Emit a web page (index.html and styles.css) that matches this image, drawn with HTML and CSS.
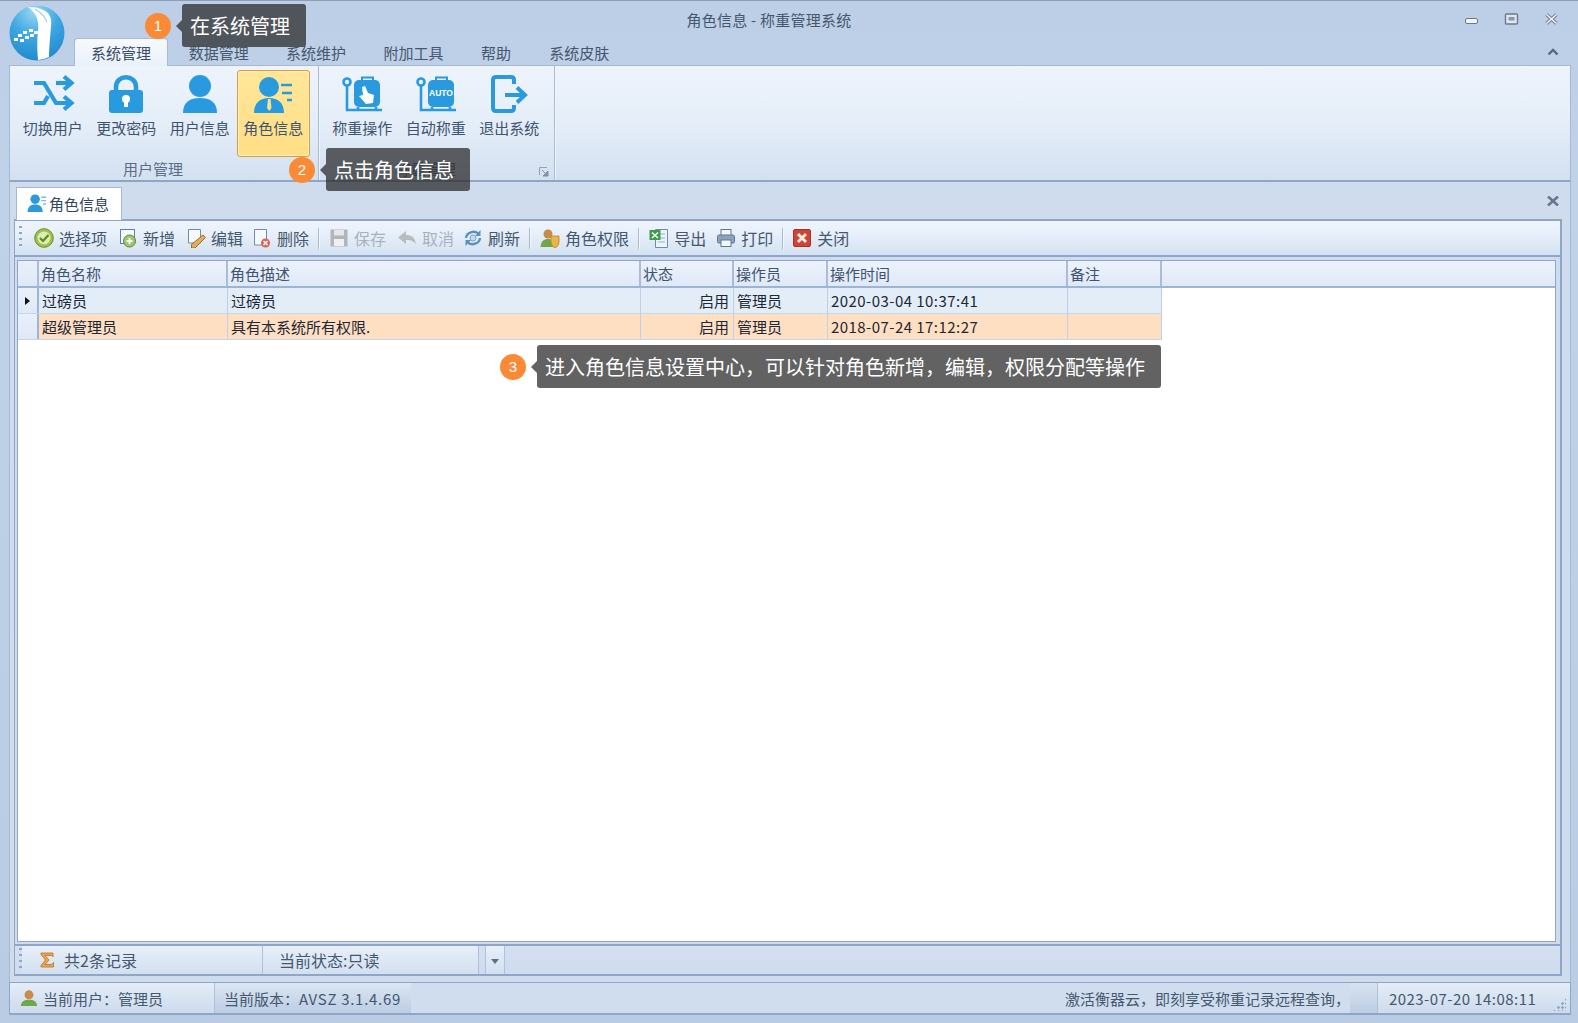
FILE: index.html
```html
<!DOCTYPE html>
<html lang="zh-CN">
<head>
<meta charset="utf-8">
<title>角色信息 - 称重管理系统</title>
<link rel="stylesheet" href="styles.css">
</head>
<body>
<div class="window">
  <svg class="logo" viewBox="0 0 56 56"><defs><radialGradient id="lg" cx=".45" cy=".1" r="1"><stop offset="0" stop-color="#9ad8f4"/><stop offset=".45" stop-color="#3fa8e2"/><stop offset="1" stop-color="#1a84cc"/></radialGradient></defs><circle cx="28" cy="28" r="27.500" fill="url(#lg)"/><path d="M19 2C30 2 40 5 42 14C43 20 41 26 40 52Q34 55 29 55C28 44 28 34 29 27C30 18 29 9 19 2Z" fill="#fff"/><path d="M26 4C31 7 36 11 38 17" fill="none" stroke="#9fd2ee" stroke-width="1.200"/><g fill="#fff"><rect x="5" y="33" width="4" height="3"/><rect x="9" y="29" width="4" height="3"/><rect x="11" y="34" width="4" height="3"/><rect x="14" y="26" width="4" height="3"/><rect x="16" y="31" width="4" height="3"/><rect x="20" y="24" width="4" height="3"/><rect x="21" y="29" width="4" height="3"/><rect x="25" y="26" width="4" height="3"/></g></svg>

  <header class="titlebar">
    <div class="title">角色信息 - 称重管理系统</div>
    <div class="winbtns">
      <svg width="16" height="12" viewBox="0 0 16 12"><rect x="1.500" y="5.500" width="12" height="5" rx="1.500" fill="#f2f5fa" stroke="#6d7888"/></svg>
      <svg width="16" height="12" viewBox="0 0 16 12"><rect x="1.500" y="1" width="12" height="10" rx="1" fill="#dfe7f2" stroke="#6d7888" stroke-width="1.400"/><rect x="4.500" y="4" width="6" height="3.500" fill="#8a97a8"/></svg>
      <svg width="16" height="12" viewBox="0 0 16 12"><path d="M2.500 1.500L12.500 10.500M12.500 1.500L2.500 10.500" stroke="#6d7888" stroke-width="3.400"/><path d="M2.500 1.500L12.500 10.500M12.500 1.500L2.500 10.500" stroke="#f2f5fa" stroke-width="1.600"/></svg>
    </div>
  </header>

  <nav class="tabs">
    <span class="tab active">系统管理</span>
    <span class="tab">数据管理</span>
    <span class="tab">系统维护</span>
    <span class="tab">附加工具</span>
    <span class="tab">帮助</span>
    <span class="tab">系统皮肤</span>
    <svg class="collapse" width="14" height="10" viewBox="0 0 14 10"><path d="M2.500 7.500L7 3L11.500 7.500" fill="none" stroke="#5c6675" stroke-width="2.400"/></svg>
  </nav>

  <section class="ribbon">
    <div class="group group-a">
      <div class="buttons">
        <div class="rb">
          <svg class="rb-icon" viewBox="0 0 44 38"><g fill="none" stroke="#2a9adf" stroke-width="4.200"><path d="M3 8H13L25 28H40"/><path d="M25 8H40"/><path d="M3 28H13L17 21"/><path d="M33 1.500L40.500 8L33 14.500"/><path d="M33 21.500L40.500 28L33 34.500"/></g></svg>
          <span>切换用户</span>
        </div>
        <div class="rb">
          <svg class="rb-icon" viewBox="0 0 44 38"><path d="M12 17V12C12 -1 32 -1 32 12V17" fill="none" stroke="#2a9adf" stroke-width="4.600"/><path d="M8 15H36Q39 15 39 18V35Q39 38 36 38H8Q5 38 5 35V18Q5 15 8 15Z" fill="#2a9adf"/><circle cx="22" cy="24" r="4" fill="#fff"/><rect x="20" y="25" width="4" height="7" fill="#fff"/></svg>
          <span>更改密码</span>
        </div>
        <div class="rb">
          <svg class="rb-icon" viewBox="0 0 44 38"><circle cx="22" cy="11" r="11" fill="#2a9adf"/><path d="M5 38C5 27 12 23 22 23C32 23 39 27 39 38Z" fill="#2a9adf"/></svg>
          <span>用户信息</span>
        </div>
        <div class="rb selected">
          <svg class="rb-icon" viewBox="0 0 44 38"><circle cx="18" cy="12" r="10" fill="#2a9adf"/><path d="M3 38C3 28 9 23 18 23C27 23 33 28 33 38Z" fill="#2a9adf"/><path d="M17 24H19.500L20.500 33L18.200 36L16 33Z" fill="#ffe08a"/><path d="M30 10H41M31 18H41M36 25H41" stroke="#2a9adf" stroke-width="2.600"/></svg>
          <span>角色信息</span>
        </div>
      </div>
      <div class="group-label">用户管理</div>
    </div>
    <div class="group group-b">
      <div class="buttons">
        <div class="rb">
          <svg class="rb-icon" viewBox="0 0 44 38"><path d="M7 8V35H42M18 32V35M36 32V35" fill="none" stroke="#2a9adf" stroke-width="2.600"/><circle cx="7" cy="7" r="3.500" fill="#e8f0fa" stroke="#2a9adf" stroke-width="2.600"/><path d="M22 6V2.500H33V6" fill="none" stroke="#2a9adf" stroke-width="2"/><rect x="14" y="5" width="26" height="27" rx="5" fill="#2a9adf"/><path d="M22 12L25 11L28 18L34 20L33 28L26 29L19 21L23 20Z" fill="#fff"/></svg>
          <span>称重操作</span>
        </div>
        <div class="rb">
          <svg class="rb-icon" viewBox="0 0 44 38"><path d="M7 8V35H42M18 32V35M36 32V35" fill="none" stroke="#2a9adf" stroke-width="2.600"/><circle cx="7" cy="7" r="3.500" fill="#e8f0fa" stroke="#2a9adf" stroke-width="2.600"/><path d="M22 6V2.500H33V6" fill="none" stroke="#2a9adf" stroke-width="2"/><rect x="14" y="5" width="26" height="27" rx="5" fill="#2a9adf"/><text x="27" y="21" class="auto">AUTO</text></svg>
          <span>自动称重</span>
        </div>
        <div class="rb">
          <svg class="rb-icon" viewBox="0 0 44 38"><path d="M27 9V5Q27 2 24 2H9Q6 2 6 5V33Q6 36 9 36H24Q27 36 27 33V30" fill="none" stroke="#2a9adf" stroke-width="4"/><path d="M18 20H37M30 12.500L38 20L30 27.500" fill="none" stroke="#2a9adf" stroke-width="4"/></svg>
          <span>退出系统</span>
        </div>
      </div>
      <div class="group-label">称重管理</div>
      <svg class="launcher" width="10" height="10" viewBox="0 0 10 10"><path d="M0.500 8V0.500H8" fill="none" stroke="#8fa2b8"/><path d="M3 3L8 8M9 4V9H4Z" fill="#7f92a8" stroke="#7f92a8"/></svg>
    </div>
    <div class="group-rest"></div>
  </section>

  <section class="docstrip">
    <div class="doctab">
      <svg width="21" height="18" viewBox="0 0 44 38"><circle cx="17" cy="11" r="10" fill="#2a9adf"/><path d="M1 38C1 27 7 22 17 22C27 22 33 27 33 38Z" fill="#2a9adf"/><path d="M30 7H40M30 14H40M34 21H40" stroke="#7db6de" stroke-width="3"/></svg>
      <span>角色信息</span>
    </div>
    <svg class="docclose" width="12" height="10" viewBox="0 0 12 10"><path d="M1 0.500L11 9.500M11 0.500L1 9.500" stroke="#66788f" stroke-width="2.600"/></svg>
  </section>

  <main class="panel">
    <div class="toolbar">
      <span class="grip"></span>
      <div class="ti first"><svg class="ti-icon" viewBox="0 0 20 20"><circle cx="10" cy="10" r="9.300" fill="#9cc243" stroke="#6b8f2a"/><circle cx="10" cy="10" r="6.500" fill="#dfeab8"/><path d="M6 10L9 13L14.500 7" fill="none" stroke="#5c8a1e" stroke-width="2.200"/></svg><span>选择项</span></div>
      <div class="ti"><svg class="ti-icon" viewBox="0 0 20 20"><rect x="2.500" y="1.500" width="14" height="14" fill="#f7f9fc" stroke="#5f7fa8"/><circle cx="11.500" cy="13" r="6" fill="#9cc96b" stroke="#5d8a3c"/><path d="M8.500 13H14.500M11.500 10V16" stroke="#fff" stroke-width="1.800"/></svg><span>新增</span></div>
      <div class="ti"><svg class="ti-icon" viewBox="0 0 20 20"><path d="M2.500 1.500H14.500V15H2.500Z" fill="#f7f9fc" stroke="#6f8cb0"/><path d="M17 7L19.500 9.500L9 20H5.500V16.500Z" fill="#e2b05a" stroke="#9a6c2a"/></svg><span>编辑</span></div>
      <div class="ti t2"><svg class="ti-icon" viewBox="0 0 20 20"><path d="M2.500 1.500H14.500V17H2.500Z" fill="#f7f9fc" stroke="#6f8cb0"/><circle cx="13.500" cy="15" r="4.500" fill="#e2604f"/><path d="M11.500 13L15.500 17M15.500 13L11.500 17" stroke="#fff" stroke-width="1.500"/></svg><span>删除</span></div>
      <span class="sep"></span>
      <div class="ti off"><svg class="ti-icon" viewBox="0 0 20 20"><rect x="1.500" y="1.500" width="17" height="17" fill="#b2b6bb"/><rect x="5" y="2" width="10" height="5.500" fill="#e4e6e8"/><rect x="5" y="11" width="10" height="7" fill="#eef0f1"/></svg><span>保存</span></div>
      <div class="ti off"><svg class="ti-icon" viewBox="0 0 20 20"><path d="M9 3V7C15 7 18 10 19 16C16 12.500 13 12 9 12V16L1 9.500Z" fill="#b8bcc1"/></svg><span>取消</span></div>
      <div class="ti t2"><svg class="ti-icon" viewBox="0 0 20 20"><g fill="none" stroke="#5d8fc0" stroke-width="2.400"><path d="M3 10A7.500 6.500 0 0 1 16 6"/><path d="M17 10A7.500 6.500 0 0 1 4 14"/></g><path d="M17.500 2V8H12ZM2.500 18V12H8Z" fill="#5d8fc0"/><circle cx="10" cy="10" r="3" fill="#c6d9ec" stroke="#7ea3c8"/></svg><span>刷新</span></div>
      <span class="sep"></span>
      <div class="ti"><svg class="ti-icon" viewBox="0 0 20 20"><circle cx="8" cy="6" r="4.500" fill="#c98a4a"/><path d="M0.500 19C1 13 4 11 8 11C12 11 14 13 14.500 19Z" fill="#6fa84a"/><path d="M11 8H19V14Q19 18 15 20Q11 18 11 14Z" fill="#eeb445" stroke="#b9822a" stroke-width=".8"/></svg><span>角色权限</span></div>
      <span class="sep"></span>
      <div class="ti"><svg class="ti-icon" viewBox="0 0 20 20"><path d="M6.500 1.500H18.500V19.500H6.500Z" fill="#edf3fa" stroke="#6f8cb0"/><path d="M9 6H16M9 10H16M9 14H16" stroke="#8fb0d0"/><rect x="0.500" y="2" width="11" height="10" fill="#3f9a4a"/><path d="M3 4.500L9 10M9 4.500L3 10" stroke="#fff" stroke-width="1.500"/></svg><span>导出</span></div>
      <div class="ti t1"><svg class="ti-icon" viewBox="0 0 20 20"><rect x="5" y="1.500" width="10" height="6" fill="#f4f7fb" stroke="#60788f"/><rect x="1.500" y="7" width="17" height="8" rx="1.500" fill="#8ba3bc" stroke="#60788f"/><rect x="5" y="12" width="10" height="6.500" fill="#f4f7fb" stroke="#60788f"/></svg><span>打印</span></div>
      <span class="sep"></span>
      <div class="ti t1"><svg class="ti-icon" viewBox="0 0 20 20"><rect x="1.500" y="1.500" width="17" height="17" rx="1.500" fill="#cf4436" stroke="#a53226"/><path d="M6 6L14 14M14 6L6 14" stroke="#f7ece0" stroke-width="3"/></svg><span>关闭</span></div>
    </div>

    <div class="grid-wrap">
      <div class="grid">
        <div class="row head">
          <div class="cell ind"></div><div class="cell">角色名称</div><div class="cell">角色描述</div><div class="cell">状态</div><div class="cell">操作员</div><div class="cell">操作时间</div><div class="cell">备注</div><div class="cell filler"></div>
        </div>
        <div class="row body-row r1">
          <div class="cell ind"><span class="arrow"></span></div><div class="cell">过磅员</div><div class="cell">过磅员</div><div class="cell right">启用</div><div class="cell">管理员</div><div class="cell num">2020-03-04 10:37:41</div><div class="cell"></div>
        </div>
        <div class="row body-row r2">
          <div class="cell ind"></div><div class="cell">超级管理员</div><div class="cell">具有本系统所有权限.</div><div class="cell right">启用</div><div class="cell">管理员</div><div class="cell num">2018-07-24 17:12:27</div><div class="cell"></div>
        </div>
      </div>
    </div>

    <div class="footbar">
      <span class="grip"></span>
      <div class="fb-a"><svg width="15" height="16" viewBox="0 0 15 16"><path d="M1 1H13V5L11.500 3.500H5L9 8L5 12.500H11.500L13.500 10.500V15H1V13.500L5.500 8L1 2.500Z" fill="#eba648" stroke="#b8742a" stroke-width=".8"/></svg><span>共2条记录</span></div>
      <div class="fb-b">当前状态:只读</div>
      <div class="fb-c"><span class="caret"></span></div>
    </div>
  </main>

  <footer class="statusbar">
    <div class="sb-user"><svg width="18" height="20" viewBox="0 0 20 20"><circle cx="10" cy="6.500" r="5" fill="#c98a4a"/><path d="M1 19C1 14 5 12 10 12C15 12 19 14 19 19Z" fill="#6fa84a"/></svg><span>当前用户：管理员</span></div>
    <div class="sb-ver"><span>当前版本：</span><span class="num ver">AVSZ 3.1.4.69</span></div>
    <div class="sb-msg">激活衡器云，即刻享受称重记录远程查询，</div>
    <div class="sb-fade"></div>
    <div class="sb-time num">2023-07-20 14:08:11</div>
    <span class="sb-grip"></span>
  </footer>

  <div class="callout c1"><b>1</b><span>在系统管理</span></div>
  <div class="callout c2"><b>2</b><span>点击角色信息</span></div>
  <div class="callout c3"><b>3</b><span>进入角色信息设置中心，可以针对角色新增，编辑，权限分配等操作</span></div>
</div>
</body>
</html>
```

FILE: styles.css
```css
* { box-sizing: border-box; }
html, body { margin: 0; height: 100%; overflow: hidden; }
body { font-family: "Noto Sans CJK SC", "Liberation Sans", sans-serif; font-size: 15px; color: #3f5470; }
svg { display: block; flex: none; }
.num { letter-spacing: .45px; white-space: nowrap; }
.ver { letter-spacing: .7px; }

.window { position: relative; width: 1578px; height: 1023px; display: flex; flex-direction: column; padding: 0 7px 0 9px; background: linear-gradient(#bccfe7, #c0d2e8 190px, #b9cce3); border-top: 1px solid #8e9db1; }

.logo { position: absolute; left: 9px; top: 4px; width: 56px; height: 56px; z-index: 3; }

.titlebar { height: 37px; flex: none; display: flex; align-items: center; justify-content: center; padding-right: 42px; position: relative; }
.title { font-size: 15px; letter-spacing: .25px; color: #46566c; margin-top: -1px; }
.winbtns { position: absolute; right: 11px; top: 12px; display: flex; gap: 24px; }

.tabs { height: 27px; flex: none; display: flex; align-items: stretch; padding-left: 65px; position: relative; }
.tab { padding: 3px 18.700px 0; line-height: 24px; font-size: 15px; color: #46566c; }
.tab:nth-child(6) { margin-left: 1px; }
.tab.active { background: linear-gradient(#f7fafe, #e9f1fa); border: 1px solid #a7bbd5; border-bottom: 0; border-radius: 4px 4px 0 0; padding: 2px 16px 0; margin-right: 2px; color: #3a4c66; position: relative; z-index: 1; margin-bottom: -1px; }
.collapse { position: absolute; right: 11px; top: 9px; }

.ribbon { height: 117px; flex: none; display: flex; background: linear-gradient(#eef4fc, #e3edf8 55%, #d3e0f0); border: 1px solid #a5b9d3; border-bottom: 2px solid #8fa6c4; }
.group { position: relative; display: flex; flex-direction: column; border-right: 1px solid #a9bcd4; box-shadow: 1px 0 0 #f0f5fb; padding: 4px 0 0 6px; }
.group-a { width: 309px; }
.group-b { width: 236px; padding-left: 6.500px; }
.group-rest { flex: 1; }
.buttons { display: flex; height: 88px; }
.rb { width: 73.500px; display: flex; flex-direction: column; align-items: center; padding-top: 4px; border: 1px solid transparent; border-radius: 3px; }
.rb span { font-size: 15px; line-height: 20px; margin-top: 5px; color: #3f5470; white-space: nowrap; }
.rb-icon { width: 44px; height: 38px; overflow: visible; }
.rb.selected { background: linear-gradient(#ffe699, #ffdf85); border-color: #dd9a42; box-shadow: inset 0 0 0 1px #fff0b8; }
.group-label { text-align: center; font-size: 15px; line-height: 22px; color: #5a6d86; margin-top: 1px; padding-right: 28px; }
.launcher { position: absolute; right: 5px; bottom: 3px; }
.auto { font: 700 8.500px "Liberation Sans", sans-serif; fill: #fff; text-anchor: middle; }

.docstrip { height: 37px; flex: none; display: flex; align-items: flex-end; padding-left: 6px; position: relative; background: #cfdcee; border-left: 1px solid #a5b9d3; border-right: 1px solid #a5b9d3; }
.doctab { width: 106px; height: 33px; display: flex; align-items: center; gap: 1px; padding-left: 10px; padding-bottom: 2px; background: #fff; border: 1px solid #a4b9d5; border-bottom: 0; color: #33465f; font-size: 15px; margin-bottom: -1px; position: relative; z-index: 1; }
.docclose { position: absolute; right: 11px; top: 14px; }

.panel { flex: 1; min-height: 0; display: flex; flex-direction: column; background: #cfdcee; border: 1px solid #a5b9d3; border-top: 0; border-bottom: 0; padding: 0 3px 0 4px; }
.toolbar { height: 38px; flex: none; display: flex; align-items: center; padding-left: 2px; border: 1px solid #8ea7c8; border-width: 2px 2px 2px 1px; background: linear-gradient(#eef4fc, #e8f0fa 35%, #d5e2f2); margin: 0 5px 0 0; }
.grip { width: 3px; height: 24px; margin-left: 2px; flex: none; background: repeating-linear-gradient(#8ea5c3 0 2px, transparent 2px 6px); }
.ti { display: flex; align-items: center; gap: 5px; font-size: 16px; color: #44586f; margin-left: 11px; white-space: nowrap; }
.ti.first { margin-left: 12px; }
.ti.t1 { margin-left: 10px; }
.ti.t2 { margin-left: 9px; }
.ti.off { color: #a7b2bf; }
.ti-icon { width: 20px; height: 20px; }
.sep { width: 1px; height: 21px; background: #a9bcd4; box-shadow: 1px 0 0 #f3f7fc; margin-left: 9px; margin-right: -1px; flex: none; }

.grid-wrap { flex: 1; min-height: 0; background: #cfdcee; padding: 3px 0 2px 2px; margin-right: 5px; border-right: 2px solid #8ea7c8; border-left: 1px solid #8ea7c8; }
.grid { height: 100%; background: #fff; border: 1px solid #8ea7c8; margin-right: 4px; display: flex; flex-direction: column; }
.row { display: grid; grid-template-columns: 21px 189px 413px 93px 94px 240px 94px 1fr; flex: none; }
.head { height: 27px; background: linear-gradient(#edf3fc, #dfe9f7); border-bottom: 2px solid #9db5d5; color: #3e5470; }
.body-row { height: 26px; color: #1d2735; width: 1144px; grid-template-columns: 21px 189px 413px 93px 94px 240px 94px; border-bottom: 1px solid #c3d6ec; }
.r1 { background: #e3edf8; }
.r2 { background: #fedfc2; }
.cell { display: flex; align-items: center; padding-left: 3px; border-right: 1px solid #bcd0e8; font-size: 15px; white-space: nowrap; }
.head .cell { border-right: 2px solid #a9bdd9; padding-left: 2px; }
.head .filler { border-right: 0; }
.cell.right { justify-content: flex-end; padding-right: 4px; }
.ind { background: linear-gradient(#e8f0fa, #dfe9f6); border-right: 2px solid #9db5d5; justify-content: center; padding: 0; }
.arrow { width: 0; height: 0; border: 4.500px solid transparent; border-left: 5px solid #111; border-right: 0; }

.footbar { height: 32px; flex: none; display: flex; align-items: center; border: 1px solid #8ea7c8; border-width: 2px 2px 2px 1px; margin: 0 5px 6px 0; padding-left: 2px; background: linear-gradient(#d4e0f0, #cfdcee); font-size: 16px; color: #44586f; }
.fb-a { width: 241px; height: 100%; flex: none; display: flex; align-items: center; gap: 9px; padding-left: 18px; border-right: 1px solid #b0c2d9; box-shadow: 1px 0 0 #eef3fa; background: linear-gradient(#e7eff9, #d3e0f0); }
.fb-b { width: 216px; height: 100%; flex: none; display: flex; align-items: center; padding-left: 16px; border-right: 1px solid #b0c2d9; background: linear-gradient(#e7eff9, #d3e0f0); }
.fb-c { width: 20px; height: 100%; flex: none; margin-left: 6px; display: flex; align-items: center; justify-content: center; border-left: 1px solid #b0c2d9; border-right: 1px solid #b0c2d9; background: linear-gradient(#e7eff9, #d3e0f0); }
.caret { border: 4px solid transparent; border-top: 5px solid #5f6f82; border-bottom: 0; margin-top: 2px; }

.statusbar { height: 33px; flex: none; display: flex; align-items: center; margin: 0 0 8px; border: 1px solid #8ea7c8; border-width: 1px 1px 2px; position: relative; background: linear-gradient(#e4edf8, #cddbec); color: #44586f; font-size: 15px; }
.sb-user { width: 205px; height: 100%; flex: none; display: flex; align-items: center; gap: 5px; padding-left: 10px; border-right: 1px solid #b0c2d9; box-shadow: 1px 0 0 #eef3fa; }
.sb-ver { width: 196px; height: 100%; flex: none; display: flex; align-items: center; padding-left: 9px; font-size: 15px; background: linear-gradient(#dbe6f3, #bccde3); }
.sb-msg { width: 939px; height: 100%; flex: none; display: flex; align-items: center; justify-content: flex-end; overflow: hidden; white-space: nowrap; background: #d0ddee; }
.sb-fade { width: 28px; height: 100%; flex: none; background: linear-gradient(#d8e3f1, #bccde3); border-right: 1px solid #b0c2d9; }
.sb-time { width: 150px; height: 100%; flex: none; display: flex; align-items: center; padding-left: 11px; background: linear-gradient(#e4edf8, #cddbec); }
.sb-grip { position: absolute; right: 4px; bottom: 2px; width: 13px; height: 13px; background: radial-gradient(circle at 1.500px 1.500px, #8fa6c2 1.100px, transparent 1.500px) 0 0 / 4px 4px; clip-path: polygon(100% 0, 100% 100%, 0 100%); }

.callout { position: absolute; display: flex; align-items: center; color: #fff; z-index: 5; }
.callout b { width: 26px; height: 26px; border-radius: 50%; background: #fa8a36; font: 400 15px/26px "Liberation Sans", sans-serif; text-align: center; flex: none; margin-right: 11px; }
.callout span { height: 43px; line-height: 43px; padding: 0 16px 0 8px; font-size: 20px; background: rgba(38, 38, 38, .72); border-radius: 3px; white-space: nowrap; position: relative; }
.callout span::before { content: ""; position: absolute; left: -6px; top: 16px; border: 6px solid transparent; border-right-color: rgba(38, 38, 38, .72); border-left: 0; }
.c1 { left: 145px; top: 3px; }
.c2 { left: 289px; top: 147px; }
.c3 { left: 500px; top: 344px; }
```
